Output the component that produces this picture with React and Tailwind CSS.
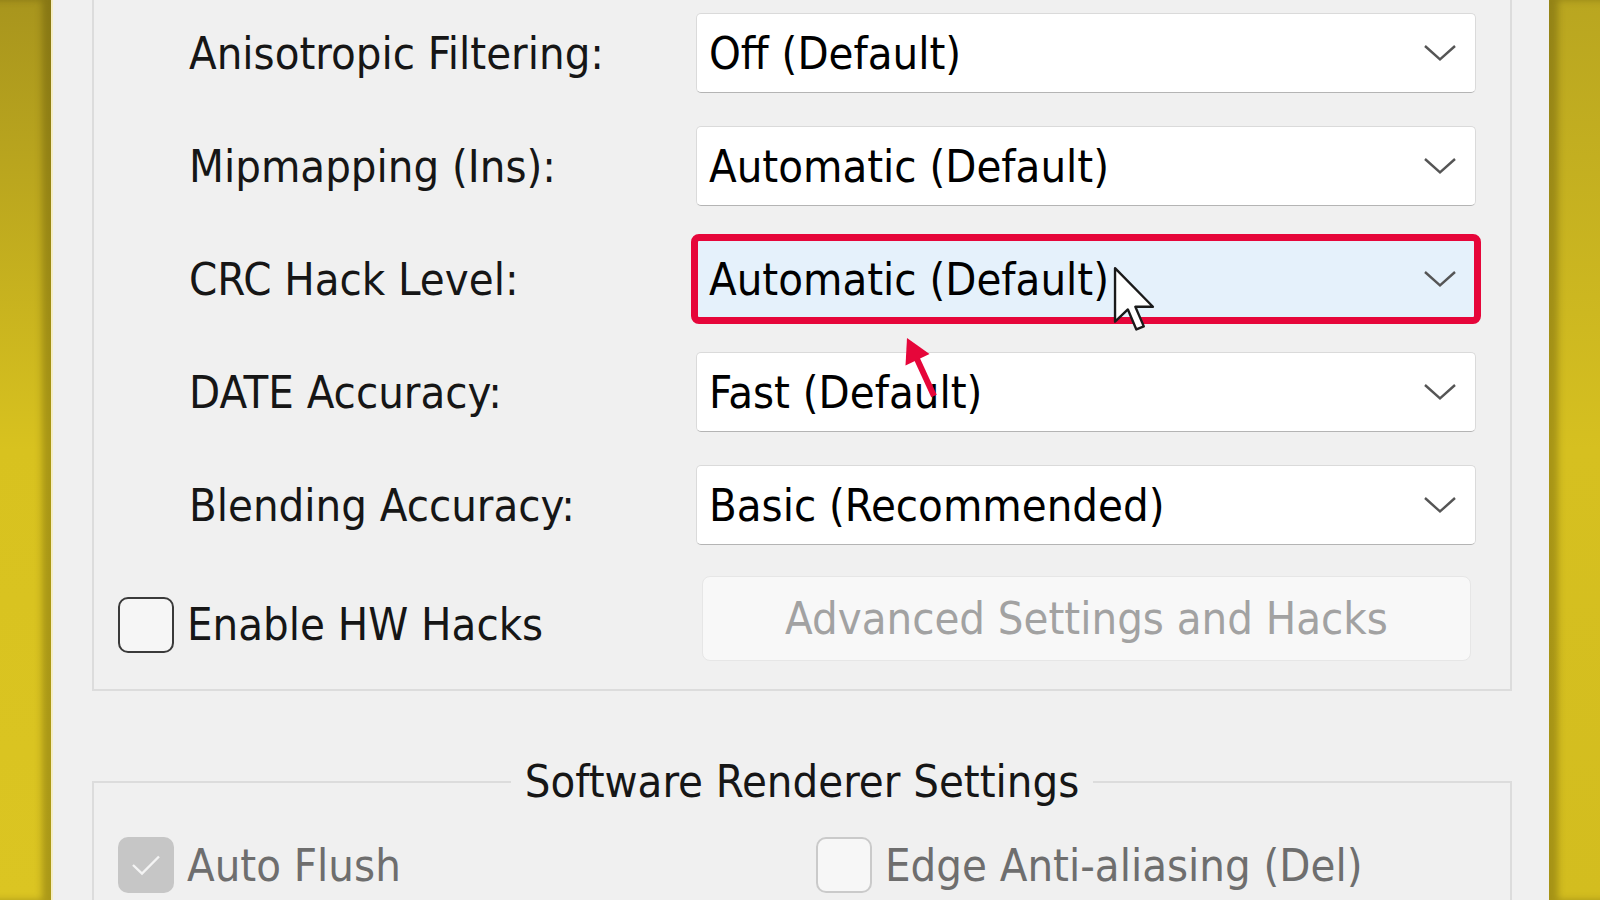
import React from 'react';

const rows = [
  { label: 'Anisotropic Filtering:', value: 'Off (Default)' },
  { label: 'Mipmapping (Ins):', value: 'Automatic (Default)' },
  { label: 'CRC Hack Level:', value: 'Automatic (Default)', active: true },
  { label: 'DATE Accuracy:', value: 'Fast (Default)' },
  { label: 'Blending Accuracy:', value: 'Basic (Recommended)' },
];

const Chevron = () => (
  <svg width="34" height="18" viewBox="0 0 34 18" fill="none">
    <path d="M2 2 L17 15.5 L32 2" stroke="#555555" strokeWidth="2.4" strokeLinejoin="miter" />
  </svg>
);

const Select = ({ value, active }) => (
  <div
    className={
      active
        ? 'flex h-[80px] w-[780px] items-center justify-between rounded-[3px] bg-[#e5f1fb] pl-[13px] pr-[19px] outline-[7px] outline-offset-[-2px] outline-[#e6063a]'
        : 'flex h-[80px] w-[780px] items-center justify-between rounded-[5px] border border-[#dadada] border-b-[#b4b4b4] bg-white pl-[12px] pr-[18px]'
    }
  >
    <span className="text-black">{value}</span>
    <Chevron />
  </div>
);

const Checkbox = ({ state }) => {
  if (state === 'disabled-checked') {
    return (
      <div className="flex h-[56px] w-[56px] shrink-0 items-center justify-center rounded-[10px] bg-[#c6c6c6]">
        <svg width="30" height="22" viewBox="0 0 30 22" fill="none">
          <path d="M2 11 L11 19.5 L28 2.5" stroke="#f4f4f4" strokeWidth="2.4" />
        </svg>
      </div>
    );
  }
  if (state === 'disabled') {
    return <div className="h-[56px] w-[56px] shrink-0 rounded-[10px] border-2 border-[#cacaca] bg-[#f7f7f7]" />;
  }
  return <div className="h-[56px] w-[56px] shrink-0 rounded-[10px] border-2 border-[#3a3a3a] bg-[#f6f6f6]" />;
};

export default function App() {
  return (
    <div className="relative flex h-[900px] w-[1600px] overflow-hidden bg-[#f0f0f0] font-['DejaVu_Sans_Condensed','DejaVu_Sans',sans-serif] text-[45px] font-stretch-condensed leading-none text-[#161616]">
      {/* left yellow edge */}
      <div className="w-[51px] shrink-0 bg-gradient-to-b from-[#a8951d] via-[#d8c21f] to-[#dbc522] shadow-[inset_-9px_0_7px_rgba(60,50,0,0.3)]" />

      {/* dialog panel */}
      <div className="flex-1 border-l-2 border-[#f6eec2] pl-[39px] pr-[37px]">
        {/* hardware renderer group (top is scrolled off) */}
        <div className="border-2 border-t-0 border-[#dcdcdc] pb-[28px] pt-[13px]">
          <div className="flex flex-col gap-y-[33px]">
            {rows.map((row, i) => (
              <div key={i} className="grid grid-cols-[602px_780px] items-center">
                <span className="pl-[95px]">{row.label}</span>
                <Select value={row.value} active={row.active} />
              </div>
            ))}
          </div>

          <div className="mt-[31px] grid grid-cols-[602px_780px] items-center">
            <label className="flex items-center gap-[13px] pl-[24px] pt-[12px]">
              <Checkbox />
              <span>Enable HW Hacks</span>
            </label>
            <button className="ml-[6px] flex h-[85px] w-[769px] items-center justify-center rounded-[8px] border border-[#e6e6e6] bg-[#f8f8f8] text-[#a2a2a2]">
              Advanced Settings and Hacks
            </button>
          </div>
        </div>

        {/* software renderer group */}
        <fieldset className="mt-[68px] border-2 border-b-0 border-[#dcdcdc] pb-[40px]">
          <legend className="mx-auto px-[14px] leading-[46px]">Software Renderer Settings</legend>
          <div className="grid grid-cols-[722px_1fr] pt-[32px] text-[#6e6e6e]">
            <div className="flex items-center gap-[13px] pl-[24px]">
              <Checkbox state="disabled-checked" />
              <span>Auto Flush</span>
            </div>
            <div className="flex items-center gap-[13px]">
              <Checkbox state="disabled" />
              <span>Edge Anti-aliasing (Del)</span>
            </div>
          </div>
        </fieldset>
      </div>

      {/* right yellow edge */}
      <div className="w-[51px] shrink-0 bg-gradient-to-b from-[#b9a620] via-[#d6c020] to-[#d3bd1f] shadow-[inset_9px_0_7px_rgba(60,50,0,0.3)]" />

      {/* annotation arrow */}
      <svg className="absolute left-[895px] top-[330px]" width="50" height="72" viewBox="0 0 50 72" fill="none">
        <line x1="22" y1="29" x2="39" y2="66" stroke="#e6063a" strokeWidth="6" />
        <polygon points="12,8 10.5,35.5 34.5,24" fill="#e6063a" />
      </svg>

      {/* mouse cursor */}
      <svg className="absolute left-[1113px] top-[266px]" width="44" height="68" viewBox="0 0 13 20" fill="none">
        <path
          d="M0.6 0.6 L0.6 16.4 L4.4 12.8 L6.9 18.7 L9.1 17.8 L6.6 12 L11.8 12 Z"
          fill="#ffffff"
          stroke="#1a1a1a"
          strokeWidth="0.7"
          strokeLinejoin="round"
        />
      </svg>
    </div>
  );
}
